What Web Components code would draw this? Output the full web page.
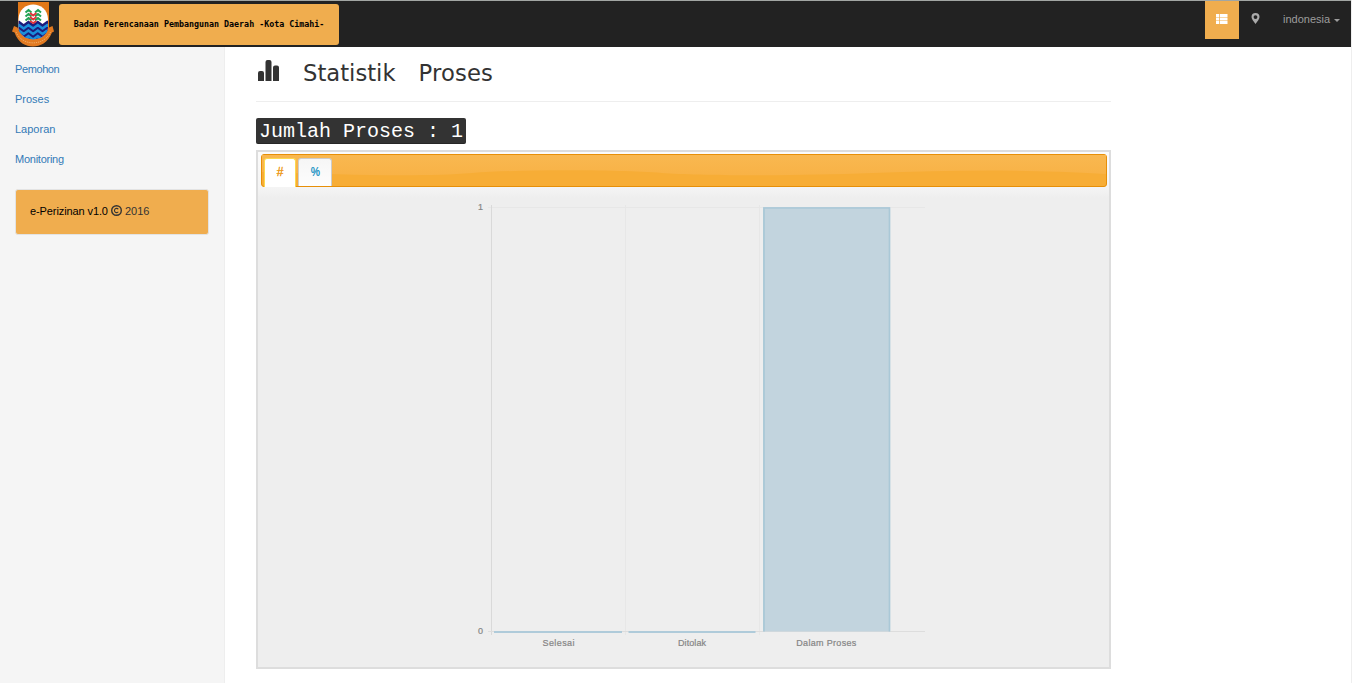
<!DOCTYPE html>
<html lang="id">
<head>
<meta charset="utf-8">
<title>e-Perizinan</title>
<style>
body{margin:0;background:#fff;font-family:"Liberation Sans",Arial,sans-serif;font-size:11px;line-height:16px;color:#333;overflow:hidden}
</style>
</head>
<body>
<app-shell></app-shell>
<script>
const define=(name,html)=>customElements.define(name,class extends HTMLElement{
  constructor(){super();this.attachShadow({mode:'open'}).innerHTML=html;}
});

define('city-crest',`<style>:host{display:block;width:44px;height:46px}svg{display:block}</style>
<svg width="44" height="46" viewBox="0 0 44 46">
<defs><clipPath id="c"><path d="M7.500 18C8 -1.500 36.500 -1.500 37 18V27C35 42 9.500 42 7.500 27z"/></clipPath></defs>
<path d="M7 1H38v28H7z" fill="#e27818"/>
<path d="M1 30.500 3 25l3.500 1.500C11 41 33 41 38 26.500l3.500-1.500L43 30.500l-2 1C37 42 29 45.500 22 45.500S7 42 3.500 31.500z" fill="#e27a20"/>
<g clip-path="url(#c)"><path d="M4 2h36v38H4z" fill="#fff"/>
<path d="M4 22l4-2.500 4.700 3.500 4.700-3.500 4.700 3.500 4.700-3.500 4.700 3.500 4.700-3.500 4 3V41H4z" fill="#1c1c7c"/>
<path d="M3.300 27.500 8 24l4.700 3.500 4.700-3.500 4.700 3.500 4.700-3.500 4.700 3.500 4.700-3.500 4.700 3.500M3.300 33 8 29.500l4.700 3.500 4.700-3.500 4.700 3.500 4.700-3.500 4.700 3.500 4.700-3.500M8 35l4.700 3.500 4.700-3.500 4.700 3.500 4.700-3.500 4.700 3.500" fill="none" stroke="#1b8fdb" stroke-width="2.600"/>
</g>
<path d="M14.500 11.500l3-2.500 3 2.500M14.500 15.500l3-2.500 3 2.500M14.500 19.500l3-2.500 3 2.500M24 11.500l3-2.500 3 2.500M24 15.500l3-2.500 3 2.500M24 19.500l3-2.500 3 2.500" fill="none" stroke="#21a355" stroke-width="2"/>
<path d="M19 12l3.200 2.500 3.200-2.500M19 16l3.200 2.500 3.200-2.500M19 20l3.200 2 3.200-2" fill="none" stroke="#e3343b" stroke-width="2"/>
<path d="M5 31c6 14.500 28 14.500 34.500 0" fill="none" stroke="#edaa68" stroke-width="1" stroke-dasharray="1.300 .9"/>
</svg>`);

define('top-bar',`<style>
:host{display:flex;box-sizing:border-box;height:47px;border-top:1px solid #a2a6a3;background:#222;padding-left:11px;color:#9d9d9d}
.brand{box-sizing:border-box;margin:3px 0 0 4px;width:280px;height:41px;border-radius:3px;background:#f0ad4e;color:#000;font:bold 8.333px/40px "DejaVu Sans Mono","Liberation Mono",monospace;text-align:center;white-space:pre}
nav{margin-left:auto;display:flex;height:38px}
.on{width:34px;background:#f0ad4e;display:grid;place-items:center}
.pin{box-sizing:border-box;width:34px;padding-right:1px;display:grid;place-items:center}
svg{display:block}
.lang{box-sizing:border-box;display:flex;align-items:center;padding:0 0 2px 10px;width:78px}
.lang i{margin:3px 0 0 4px;border:3px solid transparent;border-top-color:#9d9d9d;border-bottom:0}
</style>
<city-crest></city-crest><div class="brand">Badan Perencanaan Pembangunan Daerah -Kota Cimahi-</div>
<nav><div class="on"><svg width="12" height="10" viewBox="0 0 12 10" fill="#fff" style="margin:-2px 0 0 0"><path d="M0 0h3.300v3H0zM4 0h7.500v3H4zM0 3.500h3.300v3H0zM4 3.500h7.500v3H4zM0 7h3.300v3H0zM4 7h7.500v3H4z"/></svg></div>
<div class="pin"><svg width="9" height="11" viewBox="0 0 9 11" style="margin-top:-3px"><path fill="#aaa" fill-rule="evenodd" d="M4.500 0A4 4 0 0 0 .5 4C.5 6.200 2.500 8 4.500 11 6.500 8 8.500 6.200 8.500 4A4 4 0 0 0 4.500 0zm0 2.200a1.900 1.900 0 1 1 0 3.800 1.900 1.900 0 0 1 0-3.800z"/></svg></div>
<div class="lang">indonesia<i></i></div></nav>`);

define('side-link',`<style>:host{display:block;height:30px;line-height:30px;padding-left:15px;color:#337ab7}</style><slot></slot>`);

define('side-bar',`<style>
:host{display:block;box-sizing:border-box;width:225px;background:#f5f5f5;border-right:1px solid #eee;padding-top:7px}
.tight{letter-spacing:-.4px}.snug{letter-spacing:-.25px}
.card{box-sizing:border-box;width:194px;height:46px;margin:15px 0 0 15px;border:1px solid #e3e3e3;border-radius:3px;background:#f0ad4e;padding-left:14px;display:flex;align-items:center;gap:3px;padding-bottom:2px}
b{font-weight:400;color:#000;letter-spacing:-.1px}svg{display:block;margin-top:-1px}
</style>
<side-link class="tight">Pemohon</side-link><side-link>Proses</side-link><side-link>Laporan</side-link><side-link class="snug">Monitoring</side-link>
<div class="card"><b>e-Perizinan v1.0</b><svg width="11" height="11" viewBox="0 0 11 11" fill="none" stroke="#333"><circle cx="5.500" cy="5.500" r="4.800" stroke-width="1.400"/><path d="M7.300 4.300a2.100 2.100 0 1 0 0 2.400" stroke-width="1.100"/></svg><span>2016</span></div>`);

define('page-title',`<style>
:host{display:flex;box-sizing:border-box;height:55px;border-bottom:1px solid #eee;padding:0 0 2px 2px;align-items:center;font:22.700px/26px "DejaVu Sans",sans-serif;color:#333}
svg{display:block;margin:-6px 23px 0 0}.t{display:flex;gap:23px;margin-top:-1px}.t span+span{letter-spacing:.15px}
</style>
<svg width="22" height="22" viewBox="0 0 22 22" fill="#333"><path d="M0 22v-8q0-2 2-2h2q2 0 2 2v8zM7.500 22V3q0-2 2-2h2q2 0 2 2v19zM15 22V8.500q0-2 2-2h2q2 0 2 2V22z"/></svg><div class="t"><span>Statistik</span><span>Proses</span></div>`);

define('count-label',`<style>:host{display:block;box-sizing:border-box;width:210px;height:26px;margin-top:16px;padding-left:3px;border-radius:2px;background:#333;box-shadow:inset 0 -1px 0 rgba(0,0,0,.25);color:#fff;font:20px/28px "Liberation Mono",monospace;white-space:pre}</style><slot></slot>`);

define('tab-strip',`<style>
:host{display:block;position:relative;box-sizing:border-box;height:33px;border:1px solid #e78f08;border-radius:3px;background:#f7ad36}
.wave{position:absolute;inset:0;width:100%;height:100%}
.tabs{position:relative;display:flex;align-items:flex-start;padding:3px 0 0 2px;gap:2px}
.tab{box-sizing:border-box;height:28px;border:1px solid #ccc;border-bottom:0;border-radius:3px 3px 0 0;background:linear-gradient(#f6f6f6,#fdfdfd);color:#1c94c4;width:34px;font:bold 12px/26px "Liberation Sans",sans-serif;text-align:center}
.tab span{display:inline-block;transform:scaleX(.87)}
.tab.on{height:29px;width:32px;background:#fff;border-color:#fbd850;color:#eb8f00;font-weight:400}.on span{transform:none;-webkit-text-stroke:.3px #eb8f00}
</style>
<svg class="wave" viewBox="0 0 844 31" preserveAspectRatio="none"><defs><linearGradient id="g" x2="0" y2="1"><stop stop-color="#f9b850"/><stop offset="1" stop-color="#f8b246"/></linearGradient></defs><path fill="url(#g)" d="M0 0H844V19C760 14 690 15 610 18S440 21 400 18 260 14 210 18 90 20 0 17z"/></svg>
<div class="tabs"><div class="tab on"><span>#</span></div><div class="tab"><span>%</span></div></div>`);

define('bar-chart',`<style>:host{display:block}svg{display:block}text{font:9px "Liberation Sans",sans-serif;fill:#858585;stroke:#858585;stroke-width:.2}</style>
<svg width="851" height="480" viewBox="258 187 851 480">
<g fill="none" stroke="#e3e3e3"><path d="M488 207.500H925M625.500 205V635M759.500 205V635" stroke="#e7e7e7"/><path d="M491.500 205V635" stroke="#d9d9d9"/><path d="M488 631.500H925" stroke="#ddd"/></g>
<path d="M494 632h128M628.500 632h127" stroke="#afcbda" stroke-width="2"/>
<path d="M763 207h127v424.500H763z" fill="#c2d4de"/>
<path d="M764 631.500V208H889.500V631.500" fill="none" stroke="#aac8d7" stroke-width="1.700"/>
<text x="478" y="210">1</text><text x="478" y="634">0</text>
<text x="542.500" y="645.500" textLength="32">Selesai</text><text x="678" y="645.500" textLength="28">Ditolak</text><text x="796.300" y="645.500" textLength="60">Dalam Proses</text>
</svg>`);

define('chart-panel',`<style>
:host{display:block;box-sizing:border-box;width:855px;height:519px;margin-top:6px;border:2px solid #ddd;background:linear-gradient(#fbfbfb 0,#f4f4f4 36px,#eee 46px,#eee)}
tab-strip{margin:2px 2px 0 3px}
</style><tab-strip></tab-strip><bar-chart></bar-chart>`);

define('app-shell',`<style>
:host{display:flex;flex-direction:column;box-sizing:border-box;width:1352px;height:683px;border-right:1px solid #eee}
.body{display:flex;flex:1;min-height:0}
main{width:855px;margin-left:31px}
</style><top-bar></top-bar><div class="body"><side-bar></side-bar><main><page-title></page-title><count-label>Jumlah Proses : 1</count-label><chart-panel></chart-panel></main></div>`);
</script>
</body>
</html>
